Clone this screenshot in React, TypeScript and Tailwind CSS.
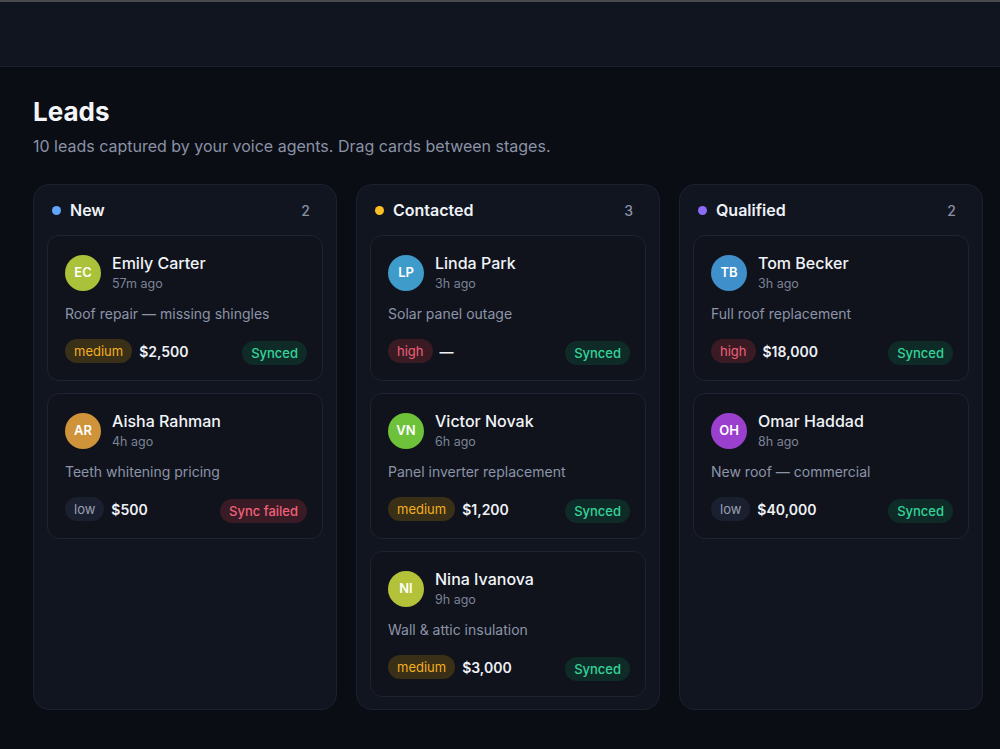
const stages = [
  {
    name: 'New',
    dot: 'bg-[#60a5fa]',
    leads: [
      {initials: 'EC', name: 'Emily Carter', ago: '57m ago', desc: 'Roof repair — missing shingles', priority: 'medium', value: '$2,500', sync: 'ok', avatar: 'bg-[#a9c23a]'},
      {initials: 'AR', name: 'Aisha Rahman', ago: '4h ago', desc: 'Teeth whitening pricing', priority: 'low', value: '$500', sync: 'failed', avatar: 'bg-[#cf943a]'},
    ],
  },
  {
    name: 'Contacted',
    dot: 'bg-[#fbbf24]',
    leads: [
      {initials: 'LP', name: 'Linda Park', ago: '3h ago', desc: 'Solar panel outage', priority: 'high', value: '—', sync: 'ok', avatar: 'bg-[#3f9bca]'},
      {initials: 'VN', name: 'Victor Novak', ago: '6h ago', desc: 'Panel inverter replacement', priority: 'medium', value: '$1,200', sync: 'ok', avatar: 'bg-[#6dc23a]'},
      {initials: 'NI', name: 'Nina Ivanova', ago: '9h ago', desc: 'Wall & attic insulation', priority: 'medium', value: '$3,000', sync: 'ok', avatar: 'bg-[#b4c23a]'},
    ],
  },
  {
    name: 'Qualified',
    dot: 'bg-[#8b6cf6]',
    leads: [
      {initials: 'TB', name: 'Tom Becker', ago: '3h ago', desc: 'Full roof replacement', priority: 'high', value: '$18,000', sync: 'ok', avatar: 'bg-[#3f8fca]'},
      {initials: 'OH', name: 'Omar Haddad', ago: '8h ago', desc: 'New roof — commercial', priority: 'low', value: '$40,000', sync: 'ok', avatar: 'bg-[#9b3fcf]'},
    ],
  },
]

const priorityStyle: Record<string, string> = {
  medium: 'bg-[#3a2f17] text-[#f5b020]',
  high: 'bg-[#3a1b23] text-[#f0607a]',
  low: 'bg-[#1b2030] text-[#98a0b3]',
}

const LeadCard = ({lead}: {lead: typeof stages[0]['leads'][0]}) => (
  <div className="rounded-xl border border-[#1f2331] bg-[#10131c] pl-[17px] pr-[15px] pt-[17px] pb-[15px]">
    <div className="flex items-center gap-[11px]">
      <div className={`flex h-9 w-9 items-center justify-center rounded-full text-[13px] font-semibold text-white ${lead.avatar}`}>
        {lead.initials}
      </div>
      <div className="flex flex-col">
        <span className="text-[16px] font-medium leading-[20px] text-[#f1f3f8]">{lead.name}</span>
        <span className="mt-[2px] text-[12.5px] leading-[18px] text-[#7b8397]">{lead.ago}</span>
      </div>
    </div>
    <p className="mt-[11px] text-[14px] leading-[20px] text-[#8c94a8]">{lead.desc}</p>
    <div className="mt-[13px] flex items-center justify-between">
      <div className="flex items-center gap-[7px]">
        <span className={`rounded-full px-[9px] py-[3px] text-[13px] leading-[18px] ${priorityStyle[lead.priority]}`}>
          {lead.priority}
        </span>
        <span className="text-[14px] font-semibold text-[#eef1f6]">{lead.value}</span>
      </div>
      {lead.sync === 'ok' ? (
        <span className="mt-[4px] rounded-full bg-[#0f2b27] px-[9px] py-[3px] text-[13px] font-medium leading-[18px] text-[#34d399]">Synced</span>
      ) : (
        <span className="mt-[4px] rounded-full bg-[#381b25] px-[9px] py-[3px] text-[13px] font-medium leading-[18px] text-[#f0607a]">Sync failed</span>
      )}
    </div>
  </div>
)

export default function App() {
  return (
    <div className="min-h-[749px] bg-[#0a0d14] font-['Inter',sans-serif]">
      <div className="h-[2px] bg-[#4a4b4f]" />
      <div className="h-[65px] border-b border-[#1b2133] bg-[#111520]" />
      <div className="px-[33px] pt-[28px] pb-[38px]">
        <h1 className="text-[26px] font-bold leading-[34px] text-[#f3f5f9]">Leads</h1>
        <p className="mt-[6px] text-[16px] leading-[22px] text-[#8a92a6]">
          10 leads captured by your voice agents. Drag cards between stages.
        </p>
        <div className="mt-[27px] flex items-stretch gap-[19px]">
          {stages.map((stage) => (
            <div key={stage.name} className="flex h-[526px] w-[304px] shrink-0 flex-col rounded-2xl border border-[#1c2130] bg-[#111520] px-[13px] pt-[14px] pb-[13px]">
              <div className="mb-[14px] flex h-[22px] items-center justify-between pl-[5px] pr-[13px]">
                <div className="flex items-center gap-[9px]">
                  <span className={`h-[9px] w-[9px] rounded-full ${stage.dot}`} />
                  <span className="text-[16px] font-semibold text-[#eef1f6]">{stage.name}</span>
                </div>
                <span className="text-[14px] font-medium text-[#8a92a6]">{stage.leads.length}</span>
              </div>
              <div className="flex flex-col gap-[12px]">
                {stage.leads.map((lead) => (
                  <LeadCard key={lead.name} lead={lead} />
                ))}
              </div>
            </div>
          ))}
        </div>
      </div>
    </div>
  )
}
